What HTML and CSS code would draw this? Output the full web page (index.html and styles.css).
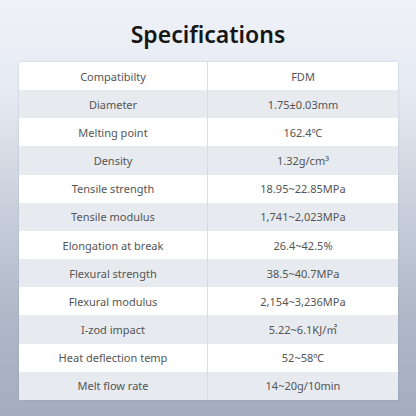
FILE: index.html
```html
<!DOCTYPE html>
<html>
<head>
<meta charset="utf-8">
<link rel="stylesheet" href="styles.css">
</head>
<body>
<div class="page">
  <h1 class="title">Specifications</h1>
  <div class="table">
    <div class="row"><div class="cell">Compatibilty</div><div class="cell">FDM</div></div>
    <div class="row"><div class="cell">Diameter</div><div class="cell">1.75±0.03mm</div></div>
    <div class="row"><div class="cell">Melting point</div><div class="cell">162.4℃</div></div>
    <div class="row"><div class="cell">Density</div><div class="cell">1.32g/cm³</div></div>
    <div class="row"><div class="cell">Tensile strength</div><div class="cell">18.95~22.85MPa</div></div>
    <div class="row"><div class="cell">Tensile modulus</div><div class="cell">1,741~2,023MPa</div></div>
    <div class="row"><div class="cell">Elongation at break</div><div class="cell">26.4~42.5%</div></div>
    <div class="row"><div class="cell">Flexural strength</div><div class="cell">38.5~40.7MPa</div></div>
    <div class="row"><div class="cell">Flexural modulus</div><div class="cell">2,154~3,236MPa</div></div>
    <div class="row"><div class="cell">I-zod impact</div><div class="cell">5.22~6.1KJ/<span class="cjk">㎡</span></div></div>
    <div class="row"><div class="cell">Heat deflection temp</div><div class="cell">52~58℃</div></div>
    <div class="row"><div class="cell">Melt flow rate</div><div class="cell">14~20g/10min</div></div>
  </div>
</div>
</body>
</html>
```
FILE: styles.css
```css
html, body {
  margin: 0;
  padding: 0;
}
body {
  width: 416px;
  height: 416px;
  overflow: hidden;
  font-family: "Noto Sans", "Open Sans", sans-serif;
}
.page {
  width: 416px;
  height: 416px;
  box-sizing: border-box;
  padding-top: 17px;
  background: linear-gradient(180deg, #eff2f8 0%, #e6eaf2 22%, #c9d0dc 50%, #b0b9c8 75%, #a3adbe 100%);
  display: flex;
  flex-direction: column;
  align-items: center;
}
.title {
  margin: 0;
  font-size: 23px;
  line-height: 34px;
  font-weight: 600;
  color: #161616;
}
.table {
  margin-top: 11px;
  margin-left: 1px;
  width: 379px;
  display: flex;
  flex-direction: column;
  box-shadow: 0 0 2px rgba(120, 130, 150, 0.35);
}
.row {
  display: grid;
  grid-template-columns: 189px 1fr;
  height: 28.17px;
  background: #ffffff;
}
.row:nth-child(even) {
  background: #e7eaef;
}
.cell {
  display: flex;
  align-items: center;
  justify-content: center;
  font-size: 11px;
  color: #555555;
}
.cell:first-child {
  border-right: 1px solid #d8dce3;
}
.cjk {
  font-family: "Noto Sans CJK SC", sans-serif;
}
```
